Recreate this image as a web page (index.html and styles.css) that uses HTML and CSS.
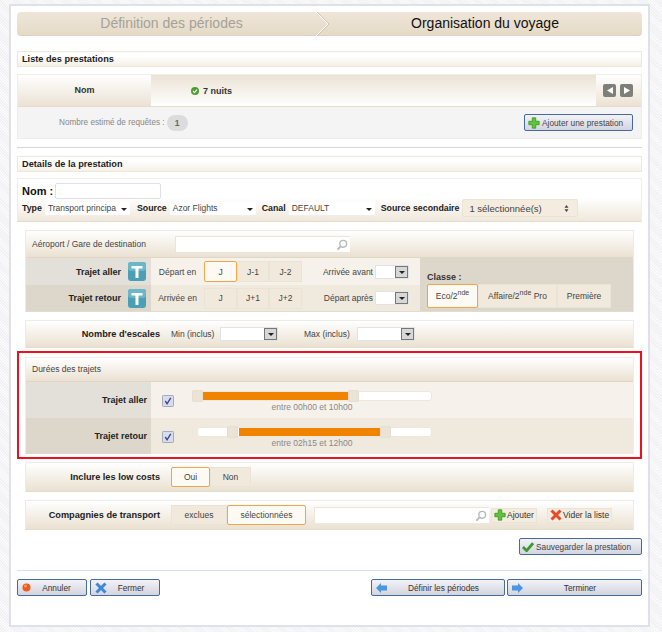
FILE: index.html
```html
<!DOCTYPE html>
<html lang="fr">
<head>
<meta charset="utf-8">
<title>Organisation du voyage</title>
<link rel="stylesheet" href="styles.css">
</head>
<body>
<svg class="defs" width="0" height="0">
  <defs>
    <symbol id="plus" viewBox="0 0 14 14"><path d="M5 1h4v4h4v4H9v4H5V9H1V5h4z" fill="#5fc43a" stroke="#3b9a22" stroke-width="1"/></symbol>
    <symbol id="lens" viewBox="0 0 12 12"><circle cx="7.2" cy="4.8" r="3.4" fill="none" stroke="#b9b9b9" stroke-width="1.4"/><path d="M4.6 7.4 1.4 10.6" stroke="#b9b9b9" stroke-width="2"/></symbol>
    <symbol id="tee" viewBox="0 0 18 19"><rect width="18" height="19" rx="3" fill="#4a9fb5"/><rect width="18" height="9" rx="3" fill="#6bb7c9"/><path d="M3.500 4h11v2.600h-4V16H7.500V6.600h-4z" fill="#fff"/></symbol>
    <symbol id="check" viewBox="0 0 13 13"><rect x=".5" y=".5" width="12" height="12" rx="1" fill="#d9dde8" stroke="#9aa3b5"/><path d="M3.500 6.500l2 3 4-6.500" fill="none" stroke="#35479a" stroke-width="1.500"/></symbol>
  </defs>
</svg>
<div class="page">
  <main class="panel">
    <div class="wizard">
      <div class="step step-off">Définition des périodes</div>
      <svg class="chevron" width="14" height="24" viewBox="0 0 14 24"><path d="M0 0l12 12L0 24" fill="none" stroke="#fff" stroke-width="1"/><path d="M1 0l12 12L1 24" fill="none" stroke="#c8bda9" stroke-width=".8"/></svg>
      <div class="step step-on">Organisation du voyage</div>
    </div>

    <h2 class="section s-list">Liste des prestations</h2>
    <section class="list">
      <div class="list-head">
        <div class="cell-name">Nom</div>
        <div class="cell-night">
          <svg width="8" height="8" viewBox="0 0 8 8"><circle cx="4" cy="4" r="4" fill="#4a9f2e"/><path d="M2 4l1.500 1.600L6 2.600" fill="none" stroke="#fff" stroke-width="1.200"/></svg>
          <span>7 nuits</span>
        </div>
        <div class="cell-nav">
          <span class="nav"><svg width="6" height="7" viewBox="0 0 6 7"><path d="M6 0v7L0 3.500z" fill="#fff"/></svg></span>
          <span class="nav"><svg width="6" height="7" viewBox="0 0 6 7"><path d="M0 0v7l6-3.500z" fill="#fff"/></svg></span>
        </div>
      </div>
      <div class="list-foot">
        <span class="estimate">Nombre estimé de requêtes :</span>
        <span class="pill">1</span>
        <button class="btn btn-add"><svg width="12" height="12"><use href="#plus"/></svg>Ajouter une prestation</button>
      </div>
    </section>

    <hr class="rule">
    <h2 class="section s-detail">Details de la prestation</h2>

    <section class="form">
      <div class="name-row"><label class="name-label">Nom :</label><input class="name-input" type="text"></div>
      <div class="type-row">
        <b>Type</b><span class="sel w-85">Transport principa<i class="caret"></i></span>
        <b class="m7">Source</b><span class="sel w-86">Azor Flights<i class="caret"></i></span>
        <b class="m6">Canal</b><span class="sel w-86">DEFAULT<i class="caret"></i></span>
        <b class="m6">Source secondaire</b>
        <span class="multi">1 sélectionnée(s)<svg width="5" height="7" viewBox="0 0 5 7"><path d="M2.500 0l2 2.700h-4zM2.500 7l2-2.700h-4z" fill="#444"/></svg></span>
      </div>
    </section>

    <section class="box box-trips">
      <div class="box-head airport">
        <span class="airport-label">Aéroport / Gare de destination</span>
        <span class="search w-175"><svg width="12" height="12"><use href="#lens"/></svg></span>
      </div>
      <div class="trip-body">
        <div class="trip-rows">
          <div class="trip-row">
            <div class="side side-a"><b>Trajet aller</b><svg width="18" height="19"><use href="#tee"/></svg></div>
            <div class="main main-a">
              <span class="when">Départ en</span>
              <div class="seg"><span class="opt on w33">J</span><span class="opt w32">J-1</span><span class="opt w33">J-2</span></div>
              <span class="limit">Arrivée avant</span>
              <span class="combo w-34"><i class="drop"></i></span>
            </div>
          </div>
          <div class="trip-row">
            <div class="side side-b"><b>Trajet retour</b><svg width="18" height="19"><use href="#tee"/></svg></div>
            <div class="main main-b">
              <span class="when">Arrivée en</span>
              <div class="seg"><span class="opt w33">J</span><span class="opt w32">J+1</span><span class="opt w33">J+2</span></div>
              <span class="limit">Départ après</span>
              <span class="combo w-34"><i class="drop"></i></span>
            </div>
          </div>
        </div>
        <div class="classes">
          <b>Classe :</b>
          <div class="seg seg-class">
            <span class="opt on c51"><span>Eco/2<sup>nde</sup></span></span><span class="opt c79"><span>Affaire/2<sup>nde</sup> Pro</span></span><span class="opt c54">Première</span>
          </div>
        </div>
      </div>
    </section>

    <section class="box box-stops">
      <b class="lead">Nombre d'escales</b>
      <span class="range-label">Min (inclus)</span>
      <span class="combo w-58"><i class="drop"></i></span>
      <span class="range-label max">Max (inclus)</span>
      <span class="combo w-58"><i class="drop"></i></span>
    </section>

    <div class="highlight">
      <section class="box box-durations">
        <div class="box-head duration-head">Durées des trajets</div>
        <div class="dur-row">
          <div class="side side-a dur-side"><b>Trajet aller</b></div>
          <div class="main main-a dur-main">
            <svg class="tick" width="12" height="12"><use href="#check"/></svg>
            <div class="slider">
              <div class="track">
                <span class="fill" style="left:5px;width:145px"></span>
                <span class="handle" style="left:-6px"></span>
                <span class="handle" style="left:150px"></span>
              </div>
              <div class="slider-text">entre 00h00 et 10h00</div>
            </div>
          </div>
        </div>
        <div class="dur-row">
          <div class="side side-b dur-side"><b>Trajet retour</b></div>
          <div class="main main-b dur-main">
            <svg class="tick" width="12" height="12"><use href="#check"/></svg>
            <div class="slider">
              <div class="track">
                <span class="fill" style="left:41px;width:141px"></span>
                <span class="handle" style="left:29px"></span>
                <span class="handle" style="left:182px"></span>
              </div>
              <div class="slider-text">entre 02h15 et 12h00</div>
            </div>
          </div>
        </div>
      </section>
    </div>

    <section class="box box-low">
      <b class="lead">Inclure les low costs</b>
      <div class="seg seg-low"><span class="opt on l39">Oui</span><span class="opt l41">Non</span></div>
    </section>

    <section class="box box-comp">
      <b class="lead">Compagnies de transport</b>
      <div class="seg seg-low"><span class="opt l56">exclues</span><span class="opt on l79">sélectionnées</span></div>
      <span class="search w-175 comp-search"><svg width="12" height="12"><use href="#lens"/></svg></span>
      <button class="mini mini-add"><svg width="12" height="12"><use href="#plus"/></svg>Ajouter</button>
      <button class="mini mini-clear">
        <svg width="12" height="12" viewBox="0 0 12 12"><path d="M1.500 1.500l9 9M10.500 1.500l-9 9" stroke="#e8492a" stroke-width="3"/></svg>Vider la liste</button>
    </section>

    <div class="save-row">
      <button class="btn btn-save">
        <svg width="12" height="11" viewBox="0 0 13 11"><path d="M1 6l4 4 7-8" fill="none" stroke="#3c9a2a" stroke-width="3"/></svg>Sauvegarder la prestation</button>
    </div>

    <hr class="rule-blue">

    <footer class="actions">
      <button class="btn act w70"><svg width="9" height="9" viewBox="0 0 9 9"><circle cx="4.500" cy="4.500" r="4" fill="#ee5a1e"/><circle cx="3.500" cy="3" r="1.500" fill="#f7a35a"/></svg><span>Annuler</span></button>
      <button class="btn act w70 gap3"><svg width="12" height="12" viewBox="0 0 12 12"><path d="M1.500 1.500l9 9M10.500 1.500l-9 9" stroke="#3d87d8" stroke-width="3"/></svg><span>Fermer</span></button>
      <button class="btn act w134 push"><svg width="11" height="10" viewBox="0 0 11 10"><path d="M0 5l5-5v2.500h6v5H5V10z" fill="#4a96e0"/></svg><span>Définir les périodes</span></button>
      <button class="btn act w135 gap2"><svg width="11" height="10" viewBox="0 0 11 10"><path d="M11 5L6 0v2.500H0v5h6V10z" fill="#4a96e0"/></svg><span>Terminer</span></button>
    </footer>
  </main>
</div>
</body>
</html>
```

FILE: styles.css
```css
* { box-sizing: border-box; }
html, body { margin: 0; padding: 0; }
body {
  width: 662px;
  height: 632px;
  overflow: hidden;
  font-family: "Liberation Sans", Arial, sans-serif;
  font-size: 8.500px;
  white-space: nowrap;
  color: #333;
  background: repeating-linear-gradient(45deg, #f1f1f3 0 1px, #fafafa 1px 2px);
}
.defs { position: absolute; }
.page { padding: 4px 12px 5px 9px; }
.panel {
  height: 623px;
  padding: 6px 6px 0;
  background: #fff;
  border: 2px solid #dfe1ea;
}

/* Wizard */
.wizard {
  display: flex;
  height: 24px;
  border-radius: 4px;
  background: linear-gradient(#efe6d8, #e5dac7);
  border-bottom: 1px solid #ddd2bf;
}
.step { font-size: 14px; line-height: 23px; text-align: center; }
.step-off { width: 299px; padding-left: 10px; color: #a5a199; }
.step-on { flex: 1; padding-right: 2px; color: #111; }
.chevron { flex: none; }

/* Section bars */
.section {
  height: 16px;
  margin: 0;
  padding-left: 4px;
  font-size: 9.200px;
  line-height: 15px;
  color: #1c1c1c;
  background: linear-gradient(#fff 30%, #f6f0e6);
  border: 1px solid #f0e7d9;
}
.s-list { margin-top: 15px; }
.s-detail { margin-top: 8px; }

/* List */
.list { margin-top: 7px; border: 1px solid #ececec; border-top-color: #eee; }
.list-head { display: flex; height: 32px; border-bottom: 1px solid #e7dccb; font-size: 9px; font-weight: bold; color: #333; }
.cell-name { width: 133px; text-align: center; line-height: 31px; background: linear-gradient(#fff, #ebe2d4); }
.cell-night {
  flex: 1;
  display: flex;
  align-items: center;
  gap: 4px;
  padding-left: 40px;
  background: linear-gradient(#ebe2d4, #fff);
}
.cell-nav {
  width: 45px;
  display: flex;
  align-items: center;
  gap: 4px;
  padding-left: 7px;
  background: linear-gradient(#fff, #ebe2d4);
}
.nav {
  width: 13px;
  height: 13px;
  border-radius: 2px;
  background: #7f7f7a;
  display: flex;
  align-items: center;
  justify-content: center;
}
.list-foot { display: flex; align-items: center; height: 31px; background: #f4f4f4; padding-left: 41px; padding-right: 8px; }
.estimate { color: #888; font-size: 8.200px; }
.pill {
  width: 21px;
  height: 16px;
  margin-left: 2px;
  border-radius: 8px;
  background: #dcdcdc;
  color: #666;
  font-weight: bold;
  text-align: center;
  line-height: 16px;
}
.rule { height: 0; margin: 8px 0 0; border: 0; border-top: 1px solid #d6d6d6; }

/* Buttons */
.btn {
  display: flex;
  align-items: center;
  height: 17px;
  padding: 0;
  font: 8.300px "Liberation Sans", Arial, sans-serif;
  color: #444;
  border: 1px solid #456a9c;
  border-radius: 2px;
  background: linear-gradient(#f2f2f6, #d4d4e0);
}
.btn-add { width: 109px; margin-left: auto; padding-left: 3px; gap: 2px; }

/* Form */
.form {
  height: 44px;
  margin-top: 6px;
  padding: 4px 4px 0;
  border: 1px solid #eee;
  border-bottom: 1px solid #e7dccb;
  background: linear-gradient(#fff 45%, #efe7da);
}
.name-row { display: flex; align-items: center; height: 16px; }
.name-label { width: 33px; font-size: 11px; font-weight: bold; color: #111; }
.name-input { width: 106px; height: 16px; padding: 0; border: 1px solid #dde0ea; border-radius: 2px; background: #fff; }
.type-row { display: flex; align-items: center; height: 18px; margin-top: 0; color: #222; }
.type-row b { font-size: 8.800px; }
.type-row .m7 { margin-left: 7px; }
.type-row .m6 { margin-left: 6px; }
.sel {
  position: relative;
  height: 13px;
  margin-left: 3px;
  padding-left: 3px;
  line-height: 13px;
  font-size: 8.500px;
  color: #444;
  background: #fff;
  border-radius: 1px;
}
.w-85 { width: 85px; }
.w-86 { width: 86px; }
.caret {
  position: absolute;
  right: 3px;
  top: 6px;
  width: 0;
  height: 0;
  border: 3px solid transparent;
  border-top: 3px solid #222;
  border-bottom: 0;
}
.multi {
  display: flex;
  align-items: center;
  justify-content: space-between;
  width: 116px;
  height: 18px;
  margin-left: 3px;
  padding: 0 8px 0 6px;
  font-size: 9.500px;
  color: #444;
  border: 1px solid #ebe3d5;
  border-radius: 2px;
  background: #f3ecdf;
}

/* Boxes */
.box {
  margin: 0 8px;
  border: 1px solid #ebebeb;
  border-bottom-color: #e3dccc;
}
.box-trips { margin-top: 8px; }
.box-head { background: linear-gradient(#fff, #eae1d1); border-bottom: 1px solid #e0d6c3; }
.airport { display: flex; align-items: center; height: 27px; padding-left: 6px; color: #444; }
.airport-label { width: 143px; }
.search {
  display: flex;
  align-items: center;
  justify-content: flex-end;
  height: 16px;
  padding-right: 2px;
  border-top: 1px solid #ece4d5;
  border-left: 1px solid #ece4d5;
  background: #fff;
}
.w-175 { width: 175px; }
.trip-body { display: flex; }
.trip-rows { width: 394px; }
.trip-row { display: flex; height: 27px; }
.trip-row + .trip-row { height: 26px; }
.side { display: flex; align-items: center; justify-content: flex-end; flex: none; width: 125px; color: #222; }
.side b { font-size: 9px; }
.trip-row .side { gap: 7px; padding-right: 5px; }
.side-a { background: #e3e0da; }
.side-b { background: #dcd6cb; }
.main { display: flex; align-items: center; flex: 1; }
.main-a { background: #f6f2eb; }
.main-b { background: #f0e9de; }
.when { width: 53px; text-align: center; color: #444; }
.seg { display: flex; border-radius: 2px; }
.opt {
  display: flex;
  align-items: center;
  justify-content: center;
  height: 21px;
  color: #444;
  background: #f0e9dc;
  border: 1px solid #ebe3d5;
}
.opt.on { background: #fdfaf3; border: 1px solid #f0a548; border-radius: 2px; }
.w33 { width: 33px; }
.w32 { width: 32px; }
.limit { width: 71px; text-align: right; color: #444; }
.combo {
  position: relative;
  flex: none;
  display: block;
  height: 14px;
  background: #fff;
  border: 1px solid #e3e3e3;
}
.w-34 { width: 34px; margin-left: 2px; }
.w-58 { width: 58px; }
.drop {
  position: absolute;
  right: 0;
  top: 0;
  width: 13px;
  height: 12px;
  background: #d7d7d7;
  border: 1px solid #777;
}
.drop::after {
  content: "";
  position: absolute;
  left: 3px;
  top: 4px;
  border: 3px solid transparent;
  border-top: 3px solid #222;
  border-bottom: 0;
}
.classes { flex: 1; padding: 14px 0 0 7px; background: #ddd7cb; color: #333; }
.classes b { display: block; height: 12px; font-size: 9px; line-height: 10px; }
.seg-class .opt { height: 24px; }
.c51 { width: 51px; }
.c79 { width: 79px; }
.c54 { width: 54px; }
sup { font-size: 7px; line-height: 0; vertical-align: 4px; }

.box-stops, .box-low, .box-comp {
  display: flex;
  align-items: center;
  background: linear-gradient(#fff, #eae1d1);
}
.box-stops { height: 28px; margin-top: 8px; }
.lead { flex: none; width: 134px; text-align: right; font-size: 9.200px; color: #222; }
.range-label { margin-left: 11px; width: 38px; color: #444; }
.box-stops .combo { margin-left: 0; }
.box-stops .range-label { width: 49px; }
.box-stops .max { margin-left: 26px; width: 53px; }

/* Highlighted block */
.highlight { height: 108px; margin-top: 3px; padding-top: 4px; border: 2px solid #f0101c; }
.box-durations { margin: 0 6px; border-color: #ededed; height: 97px; }
.duration-head { height: 24px; padding-left: 6px; line-height: 23px; color: #444; }
.dur-row { display: flex; height: 36px; }
.dur-side { padding-right: 4px; }
.dur-main { position: relative; padding-left: 11px; align-items: flex-start; }
.tick { margin-top: 13px; }
.slider { width: 235px; margin-left: 23px; padding-top: 9px; }
.track {
  position: relative;
  height: 10px;
  background: #fff;
  border: 1px solid #efe7d9;
  border-radius: 3px;
}
.fill { position: absolute; top: 0; height: 8px; background: #f08400; }
.handle {
  position: absolute;
  top: -2px;
  width: 11px;
  height: 12px;
  background: #eae3d6;
  border: 1px solid #e6decf;
  border-radius: 2px;
}
.slider-text { margin-top: 1px; padding-right: 5px; text-align: center; color: #888; line-height: 11px; }

.box-low { height: 30px; margin-top: 3px; }
.seg-low { margin-left: 11px; }
.seg-low .opt { height: 20px; }
.l39 { width: 39px; }
.l41 { width: 41px; }
.l56 { width: 56px; }
.l79 { width: 79px; }
.box-comp { height: 30px; margin-top: 8px; }
.comp-search { margin-left: 8px; }
.mini {
  display: flex;
  align-items: center;
  height: 15px;
  padding: 0;
  gap: 1px;
  font: 8.500px "Liberation Sans", Arial, sans-serif;
  color: #333;
  background: #f3ecdf;
  border: 1px solid #ebe3d5;
}
.mini-add { width: 46px; margin-left: 2px; padding-left: 2px; }
.mini-clear { width: 65px; margin-left: 10px; padding-left: 2px; }

.save-row { display: flex; justify-content: flex-end; margin-top: 8px; }
.btn-save { width: 123px; gap: 2px; padding-left: 2px; }
.rule-blue { height: 0; margin: 15px 0 0; border: 0; border-top: 1px solid #d3e2f5; }

.actions { display: flex; margin-top: 8px; }
.act { position: relative; padding-left: 4px; padding-right: 4px; color: #333; }
.act span { flex: 1; text-align: center; }
.w70 { width: 70px; }
.w134 { width: 134px; }
.w135 { width: 135px; }
.gap3 { margin-left: 3px; }
.gap2 { margin-left: 2px; }
.push { margin-left: auto; }
```
